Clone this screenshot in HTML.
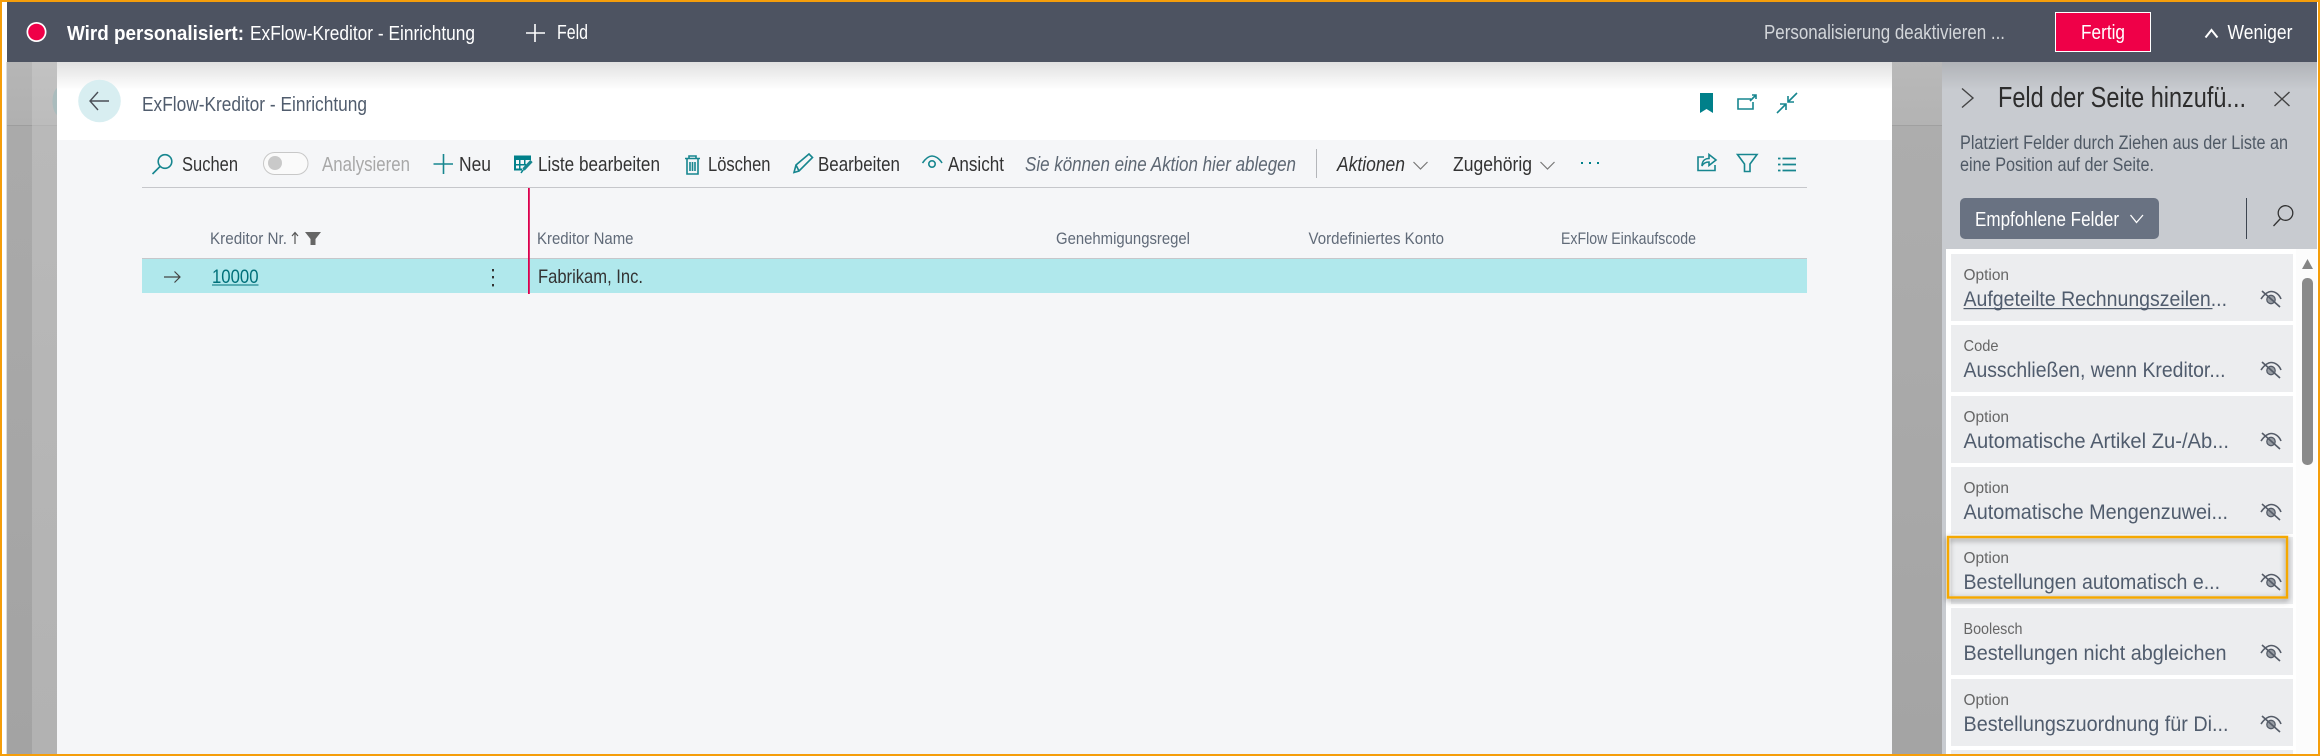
<!DOCTYPE html>
<html lang="de"><head><meta charset="utf-8"><title>Feld</title>
<style>html,body{margin:0;padding:0;width:2320px;height:756px;overflow:hidden;background:#fff}svg{display:block}text{font-family:"Liberation Sans",sans-serif;white-space:pre}.i{fill:none;stroke:#17868f;stroke-width:1.6}.e{fill:none;stroke:#555c68;stroke-width:1.6}</style></head><body>
<svg xmlns="http://www.w3.org/2000/svg" width="2320" height="756" viewBox="0 0 2320 756">
<defs>
<linearGradient id="sh" x1="0" y1="0" x2="0" y2="1"><stop offset="0" stop-color="#000" stop-opacity=".12"/><stop offset="1" stop-color="#000" stop-opacity="0"/></linearGradient>
<linearGradient id="a1" x1="0" y1="0" x2="0" y2="1"><stop offset="0" stop-color="#b6b6b6"/><stop offset="1" stop-color="#b0b0b0"/></linearGradient>
<linearGradient id="a2" x1="0" y1="0" x2="0" y2="1"><stop offset="0" stop-color="#aaaaaa"/><stop offset="1" stop-color="#a3a3a3"/></linearGradient>
<linearGradient id="b1" x1="0" y1="0" x2="0" y2="1"><stop offset="0" stop-color="#c2c2c2"/><stop offset="1" stop-color="#bcbcbc"/></linearGradient>
<linearGradient id="b2" x1="0" y1="0" x2="0" y2="1"><stop offset="0" stop-color="#b9b9b9"/><stop offset="1" stop-color="#b2b2b2"/></linearGradient>
<linearGradient id="c1" x1="0" y1="0" x2="0" y2="1"><stop offset="0" stop-color="#b9b9b9"/><stop offset="1" stop-color="#b3b3b3"/></linearGradient>
<linearGradient id="c2" x1="0" y1="0" x2="0" y2="1"><stop offset="0" stop-color="#adadad"/><stop offset="1" stop-color="#a4a4a4"/></linearGradient>
<filter id="ds" x="-5%" y="-20%" width="110%" height="140%"><feDropShadow dx="0" dy="2" stdDeviation="3" flood-color="#000" flood-opacity=".5"/></filter>
<g id="eo"><path class="e" d="M1 9C5 3 9 1.500 11 1.500C15 1.500 19 4 21 9"/><circle cx="11" cy="9.500" r="4.200" fill="#555c68" fill-opacity=".55" stroke="#555c68" stroke-width="1.300"/><path class="e" d="M2 1L20 17" stroke-width="1.800"/></g>
</defs>
<rect width="2320" height="756" fill="#fff"/>
<rect x="7" y="62" width="25" height="63" fill="url(#a1)"/><rect x="7" y="126" width="25" height="628" fill="url(#a2)"/>
<rect x="32" y="62" width="25" height="63" fill="url(#b1)"/><rect x="32" y="126" width="25" height="628" fill="url(#b2)"/>
<rect x="7" y="125" width="25" height="1" fill="#9d9d9d"/><rect x="32" y="125" width="25" height="1" fill="#b2b2b2"/>
<rect x="6" y="62" width="1" height="692" fill="#ddd"/>
<rect x="57" y="62" width="1835" height="692" fill="#f5f6f8"/><rect x="57" y="62" width="1835" height="78" fill="#fff"/>
<path d="M57 88C51 93 51 110 57 115Z" fill="#aabcbd"/>
<rect x="1892" y="62" width="50" height="63" fill="url(#c1)"/><rect x="1892" y="126" width="50" height="628" fill="url(#c2)"/><rect x="1892" y="125" width="50" height="1" fill="#a0a0a0"/>
<rect x="1942" y="62" width="375" height="692" fill="#c8cbd0"/>
<rect x="1946" y="249" width="371" height="505" fill="#fff"/>
<rect x="57" y="62" width="1835" height="28" fill="url(#sh)"/><rect x="1942" y="62" width="375" height="28" fill="url(#sh)"/>
<rect x="7" y="2" width="2310" height="60" fill="#4d5361"/>
<circle cx="36.500" cy="32" r="10" fill="#fff"/><circle cx="36.500" cy="32" r="8.300" fill="#ef0048"/>
<text x="67" y="40" font-size="20.500" font-weight="700" fill="#fff" textLength="177" lengthAdjust="spacingAndGlyphs">Wird personalisiert:</text>
<text x="250" y="40" font-size="20.500" fill="#fff" textLength="225" lengthAdjust="spacingAndGlyphs">ExFlow-Kreditor - Einrichtung</text>
<path d="M535 24V42M526 33H545" stroke="#fff" stroke-width="1.600" fill="none"/>
<text x="557" y="39" font-size="20.500" fill="#fff" textLength="31" lengthAdjust="spacingAndGlyphs">Feld</text>
<text x="1764" y="39" font-size="20.500" fill="#d3d6da" textLength="241" lengthAdjust="spacingAndGlyphs">Personalisierung deaktivieren ...</text>
<rect x="2055.500" y="12.500" width="95" height="39" fill="#ef0048" stroke="#fff"/>
<text x="2081" y="39" font-size="20.500" fill="#fff" textLength="44" lengthAdjust="spacingAndGlyphs">Fertig</text>
<path d="M2205.500 37.500L2211.500 30L2217.500 37.500" stroke="#fff" stroke-width="2" fill="none"/>
<text x="2227.500" y="39" font-size="20.500" fill="#fff" textLength="65" lengthAdjust="spacingAndGlyphs">Weniger</text>
<circle cx="99.500" cy="101" r="21.300" fill="#d8eef1"/>
<path d="M109 101H90M98 92L90 101L98 110" stroke="#4a4f57" stroke-width="1.400" fill="none"/>
<text x="142" y="111" font-size="20.500" fill="#505c6d" textLength="225" lengthAdjust="spacingAndGlyphs">ExFlow-Kreditor - Einrichtung</text>
<path d="M1700 93H1713V113L1706.500 109L1700 113Z" fill="#00808a"/>
<path class="i" d="M1751 99H1738V109H1753V102M1750 101L1756 95M1752 95H1756V99"/>
<path class="i" d="M1797 93L1788 102M1788 96V102H1794M1777 113L1786 104M1786 110V104H1780"/>
<circle cx="165" cy="161.500" r="6.800" class="i"/><path class="i" d="M160 166.500L152.500 174"/>
<text x="182" y="171" font-size="20.500" fill="#333" textLength="56" lengthAdjust="spacingAndGlyphs">Suchen</text>
<rect x="263.500" y="152.500" width="44.500" height="22" rx="11" fill="#fafafa" stroke="#c8c8c8"/><circle cx="275" cy="163" r="7" fill="#c9c9c9"/>
<text x="322" y="171" font-size="20.500" fill="#a8a8a8" textLength="88" lengthAdjust="spacingAndGlyphs">Analysieren</text>
<path class="i" d="M443.500 154V174M433.500 164H453"/>
<text x="459" y="171" font-size="20.500" fill="#333" textLength="32" lengthAdjust="spacingAndGlyphs">Neu</text>
<path d="M514 155.500H531V160H514ZM514 160H516V170.500H514ZM514 164H526V165.500H514ZM514 168.500H522V170.500H514ZM519 160H520.500V170H519ZM524 160H525.500V165H524Z" fill="#00808a"/>
<path d="M523.500 169.500L531.500 161" stroke="#17868f" stroke-width="3.200" fill="none"/><path d="M521 173L523.500 169.500" stroke="#00808a" stroke-width="1.500"/>
<text x="538" y="171" font-size="20.500" fill="#333" textLength="122" lengthAdjust="spacingAndGlyphs">Liste bearbeiten</text>
<path class="i" d="M685 158.500H700M689 158.500V156H696V158.500M687 158.500V174H698V158.500M690 162V171M692.500 162V171M695 162V171"/>
<text x="708" y="171" font-size="20.500" fill="#333" textLength="62.500" lengthAdjust="spacingAndGlyphs">Löschen</text>
<path class="i" d="M794 172.500L796 165L809 154L812.500 157.500L799 171ZM796 165L799 171"/>
<text x="818" y="171" font-size="20.500" fill="#333" textLength="82" lengthAdjust="spacingAndGlyphs">Bearbeiten</text>
<path class="i" d="M922.500 163C926 158 929 156 932 156C935 156 939 158 942 163"/><circle class="i" cx="932" cy="164" r="3.200"/>
<text x="948" y="171" font-size="20.500" fill="#333" textLength="56" lengthAdjust="spacingAndGlyphs">Ansicht</text>
<text x="1025" y="171" font-size="20.500" font-style="italic" fill="#5d6773" textLength="271" lengthAdjust="spacingAndGlyphs">Sie können eine Aktion hier ablegen</text>
<rect x="1316" y="149" width="1" height="29" fill="#b4b6ba"/>
<text x="1337" y="171" font-size="20.500" font-style="italic" fill="#333" textLength="68" lengthAdjust="spacingAndGlyphs">Aktionen</text>
<path d="M1413.500 162L1420.500 169L1427.500 162" stroke="#777" stroke-width="1.200" fill="none"/>
<text x="1453" y="171" font-size="20.500" fill="#333" textLength="79" lengthAdjust="spacingAndGlyphs">Zugehörig</text>
<path d="M1540.500 162L1547.500 169L1554.500 162" stroke="#777" stroke-width="1.200" fill="none"/>
<rect x="1581" y="162" width="2" height="2" fill="#00808a"/><rect x="1589" y="162" width="2" height="2" fill="#00808a"/><rect x="1597" y="162" width="2" height="2" fill="#00808a"/>
<path class="i" d="M1704 157H1698V170.500H1715V165M1702 166C1702 160 1706 158.500 1709 158.500V154.500L1716 160L1709 165.500V162C1706 162 1703.500 163 1702 166Z"/>
<path class="i" d="M1737.500 154.500H1757L1750 164V171.500H1744.500V164Z"/>
<path d="M1778 158.500H1780.500M1782.500 158.500H1796M1778 164.500H1780.500M1782.500 164.500H1796M1778 170.500H1780.500M1782.500 170.500H1796" stroke="#17868f" stroke-width="1.700" fill="none"/>
<rect x="142" y="187" width="1665" height="1" fill="#c6c7cb"/>
<text x="210" y="244" font-size="16.500" fill="#606a78" textLength="77" lengthAdjust="spacingAndGlyphs">Kreditor Nr.</text>
<path d="M295 244V233M292 236L295 232.500L298 236" stroke="#555" stroke-width="1.200" fill="none"/>
<path d="M305 232H321L315.500 239V245H310.500V239Z" fill="#666"/>
<text x="537" y="244" font-size="16.500" fill="#606a78" textLength="96.500" lengthAdjust="spacingAndGlyphs">Kreditor Name</text>
<text x="1056" y="244" font-size="16.500" fill="#606a78" textLength="134" lengthAdjust="spacingAndGlyphs">Genehmigungsregel</text>
<text x="1308.500" y="244" font-size="16.500" fill="#606a78" textLength="135.500" lengthAdjust="spacingAndGlyphs">Vordefiniertes Konto</text>
<text x="1561" y="244" font-size="16.500" fill="#606a78" textLength="135" lengthAdjust="spacingAndGlyphs">ExFlow Einkaufscode</text>
<rect x="142" y="258" width="1665" height="1" fill="#c6c7cb"/>
<rect x="142" y="259" width="1665" height="34" fill="#b0e8ec"/>
<rect x="528" y="188" width="1.800" height="106" fill="#dc004e"/>
<path d="M164 277H180M174.500 271.500L180 277L174.500 282.500" stroke="#444" stroke-width="1.200" fill="none"/>
<text x="212" y="283" font-size="19.500" fill="#00707a" textLength="46.500" lengthAdjust="spacingAndGlyphs">10000</text>
<rect x="212" y="284.500" width="46.500" height="1" fill="#00707a"/>
<rect x="492" y="269" width="2" height="2.400" fill="#333"/><rect x="492" y="276" width="2" height="2.400" fill="#333"/><rect x="492" y="284" width="2" height="2.400" fill="#333"/>
<text x="538" y="283" font-size="19.500" fill="#333" textLength="105" lengthAdjust="spacingAndGlyphs">Fabrikam, Inc.</text>
<path d="M1962 88.500L1973 98L1962 107.500" stroke="#444" stroke-width="1.400" fill="none"/>
<text x="1998" y="107" font-size="28.500" fill="#2d2d2d" textLength="248" lengthAdjust="spacingAndGlyphs">Feld der Seite hinzufü...</text>
<path d="M2274.500 92L2289.500 106M2289.500 92L2274.500 106" stroke="#444" stroke-width="1.400" fill="none"/>
<text x="1960" y="149" font-size="19.500" fill="#4f5965" textLength="328" lengthAdjust="spacingAndGlyphs">Platziert Felder durch Ziehen aus der Liste an</text>
<text x="1960" y="171" font-size="19.500" fill="#4f5965" textLength="194" lengthAdjust="spacingAndGlyphs">eine Position auf der Seite.</text>
<rect x="1960" y="198" width="199" height="41" rx="5" fill="#697282"/>
<text x="1975" y="226" font-size="20.500" fill="#fff" textLength="144" lengthAdjust="spacingAndGlyphs">Empfohlene Felder</text>
<path d="M2130.500 215L2136.500 222.500L2143 215" stroke="#fff" stroke-width="1.300" fill="none"/>
<rect x="2246" y="198" width="1" height="41" fill="#3d4550"/>
<circle cx="2285.500" cy="213" r="7.300" fill="none" stroke="#333" stroke-width="1.300"/><path d="M2280.500 218.500L2273.500 226" stroke="#333" stroke-width="1.300"/>
<rect x="2296" y="249" width="21" height="505" fill="#fcfcfc"/>
<path d="M2302 269L2307.500 259L2313 269Z" fill="#858585"/><rect x="2302" y="278" width="11" height="187" rx="5" fill="#8a8a8a"/>
<g font-size="16" fill="#666">
<rect x="1951" y="254" width="342" height="67" fill="#ecedef"/><rect x="1951" y="325" width="342" height="67" fill="#ecedef"/><rect x="1951" y="396" width="342" height="67" fill="#ecedef"/><rect x="1951" y="467" width="342" height="67" fill="#ecedef"/><rect x="1951" y="537" width="342" height="67" fill="#ecedef"/><rect x="1951" y="608" width="342" height="67" fill="#ecedef"/><rect x="1951" y="679" width="342" height="67" fill="#ecedef"/><rect x="1951" y="750" width="342" height="4" fill="#ecedef"/>
<text x="1963.500" y="280" textLength="45.500" lengthAdjust="spacingAndGlyphs">Option</text>
<text x="1963.500" y="351" textLength="35" lengthAdjust="spacingAndGlyphs">Code</text>
<text x="1963.500" y="422" textLength="45.500" lengthAdjust="spacingAndGlyphs">Option</text>
<text x="1963.500" y="493" textLength="45.500" lengthAdjust="spacingAndGlyphs">Option</text>
<text x="1963.500" y="563" textLength="45.500" lengthAdjust="spacingAndGlyphs">Option</text>
<text x="1963.500" y="634" textLength="59" lengthAdjust="spacingAndGlyphs">Boolesch</text>
<text x="1963.500" y="705" textLength="45.500" lengthAdjust="spacingAndGlyphs">Option</text>
</g>
<g font-size="21.500" fill="#505c6d">
<text x="1963.500" y="306" textLength="263.500" lengthAdjust="spacingAndGlyphs">Aufgeteilte Rechnungszeilen...</text><rect x="1963.500" y="308" width="249" height="1.200" fill="#505c6d"/>
<text x="1963.500" y="377" textLength="262" lengthAdjust="spacingAndGlyphs">Ausschließen, wenn Kreditor...</text>
<text x="1963.500" y="448" textLength="265.500" lengthAdjust="spacingAndGlyphs">Automatische Artikel Zu-/Ab...</text>
<text x="1963.500" y="519" textLength="264.500" lengthAdjust="spacingAndGlyphs">Automatische Mengenzuwei...</text>
<text x="1963.500" y="589" textLength="256.500" lengthAdjust="spacingAndGlyphs">Bestellungen automatisch e...</text>
<text x="1963.500" y="660" textLength="263" lengthAdjust="spacingAndGlyphs">Bestellungen nicht abgleichen</text>
<text x="1963.500" y="731" textLength="265" lengthAdjust="spacingAndGlyphs">Bestellungszuordnung für Di...</text>
</g>
<use href="#eo" x="2260" y="290"/><use href="#eo" x="2260" y="361"/><use href="#eo" x="2260" y="432"/><use href="#eo" x="2260" y="503"/><use href="#eo" x="2260" y="573"/><use href="#eo" x="2260" y="644"/><use href="#eo" x="2260" y="715"/>
<rect x="1948" y="537" width="339" height="60.500" fill="none" stroke="#f5a800" stroke-width="2.400" filter="url(#ds)"/>
<rect x="0" y="0" width="2320" height="2" fill="#f59e0b"/><rect x="0" y="754" width="2320" height="2" fill="#f59e0b"/><rect x="0" y="0" width="2" height="756" fill="#f59e0b"/><rect x="2318" y="0" width="2" height="756" fill="#f59e0b"/>
</svg>
</body></html>
